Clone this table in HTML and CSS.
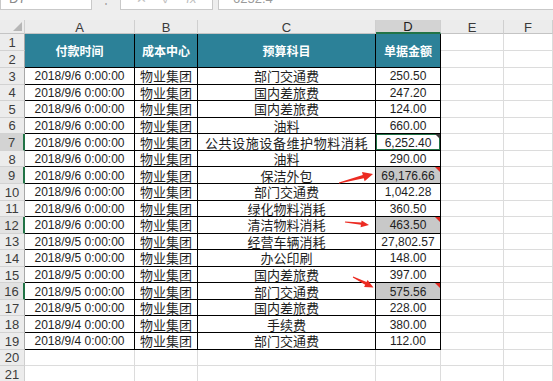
FILE: index.html
```html
<!DOCTYPE html>
<html lang="zh">
<head>
<meta charset="utf-8">
<title>Sheet</title>
<link rel="stylesheet" href="styles.css">
</head>
<body>
<div class="page">
  <div class="topbar">
    <div class="box namebox"><span class="cut">D7</span></div>
    <div class="grip"><span class="cut">⋮</span></div>
    <div class="box fxbox"><span class="cut">✕</span><span class="cut">✓</span><span class="cut fx">fx</span></div>
    <div class="box formula"><span class="cut">6252.4</span></div>
  </div>
  <div class="sheet">
    <div class="corner"><span class="tri"></span></div>
    <div class="ch">A</div><div class="ch">B</div><div class="ch">C</div><div class="ch sel">D</div><div class="ch">E</div><div class="ch">F</div>

    <div class="rh">1</div>
    <div class="h">付款时间</div><div class="h">成本中心</div><div class="h">预算科目</div><div class="h">单据金额</div>
    <div class="c"></div><div class="c"></div>
    <div class="rh">2</div>
    <div class="c"></div><div class="c"></div>

    <div class="rh">3</div><div class="t dt">2018/9/6 0:00:00</div><div class="t cn">物业集团</div><div class="t cn">部门交通费</div><div class="t num">250.50</div><div class="c"></div><div class="c"></div>
    <div class="rh">4</div><div class="t dt">2018/9/6 0:00:00</div><div class="t cn">物业集团</div><div class="t cn">国内差旅费</div><div class="t num">247.20</div><div class="c"></div><div class="c"></div>
    <div class="rh">5</div><div class="t dt">2018/9/6 0:00:00</div><div class="t cn">物业集团</div><div class="t cn">国内差旅费</div><div class="t num">124.00</div><div class="c"></div><div class="c"></div>
    <div class="rh">6</div><div class="t dt">2018/9/6 0:00:00</div><div class="t cn">物业集团</div><div class="t cn">油料</div><div class="t num">660.00</div><div class="c"></div><div class="c"></div>
    <div class="rh act">7</div><div class="t dt">2018/9/6 0:00:00</div><div class="t cn">物业集团</div><div class="t cn wide">公共设施设备维护物料消耗</div><div class="t num active note dark">6,252.40</div><div class="c"></div><div class="c"></div>
    <div class="rh">8</div><div class="t dt">2018/9/6 0:00:00</div><div class="t cn">物业集团</div><div class="t cn">油料</div><div class="t num">290.00</div><div class="c"></div><div class="c"></div>
    <div class="rh sel">9</div><div class="t dt">2018/9/6 0:00:00</div><div class="t cn">物业集团</div><div class="t cn">保洁外包</div><div class="t num hl note">69,176.66</div><div class="c"></div><div class="c"></div>
    <div class="rh">10</div><div class="t dt">2018/9/6 0:00:00</div><div class="t cn">物业集团</div><div class="t cn">部门交通费</div><div class="t num">1,042.28</div><div class="c"></div><div class="c"></div>
    <div class="rh">11</div><div class="t dt">2018/9/6 0:00:00</div><div class="t cn">物业集团</div><div class="t cn">绿化物料消耗</div><div class="t num">360.50</div><div class="c"></div><div class="c"></div>
    <div class="rh sel">12</div><div class="t dt">2018/9/6 0:00:00</div><div class="t cn">物业集团</div><div class="t cn">清洁物料消耗</div><div class="t num hl note">463.50</div><div class="c"></div><div class="c"></div>
    <div class="rh">13</div><div class="t dt">2018/9/5 0:00:00</div><div class="t cn">物业集团</div><div class="t cn">经营车辆消耗</div><div class="t num">27,802.57</div><div class="c"></div><div class="c"></div>
    <div class="rh">14</div><div class="t dt">2018/9/5 0:00:00</div><div class="t cn">物业集团</div><div class="t cn">办公印刷</div><div class="t num">148.00</div><div class="c"></div><div class="c"></div>
    <div class="rh">15</div><div class="t dt">2018/9/5 0:00:00</div><div class="t cn">物业集团</div><div class="t cn">国内差旅费</div><div class="t num">397.00</div><div class="c"></div><div class="c"></div>
    <div class="rh sel">16</div><div class="t dt">2018/9/5 0:00:00</div><div class="t cn">物业集团</div><div class="t cn">部门交通费</div><div class="t num hl note">575.56</div><div class="c"></div><div class="c"></div>
    <div class="rh">17</div><div class="t dt">2018/9/5 0:00:00</div><div class="t cn">物业集团</div><div class="t cn">国内差旅费</div><div class="t num">228.00</div><div class="c"></div><div class="c"></div>
    <div class="rh">18</div><div class="t dt">2018/9/4 0:00:00</div><div class="t cn">物业集团</div><div class="t cn">手续费</div><div class="t num">380.00</div><div class="c"></div><div class="c"></div>
    <div class="rh">19</div><div class="t dt">2018/9/4 0:00:00</div><div class="t cn">物业集团</div><div class="t cn">部门交通费</div><div class="t num">112.00</div><div class="c"></div><div class="c"></div>
    <div class="rh out">20</div><div class="c"></div><div class="c"></div><div class="c"></div><div class="c"></div><div class="c"></div><div class="c"></div>
    <div class="rh out">21</div><div class="c"></div><div class="c"></div><div class="c"></div><div class="c"></div><div class="c"></div><div class="c"></div>
  </div>
  <svg class="arrows" width="553" height="381" viewBox="0 0 553 381">
    <polygon fill="#ec2b22" points="339.1,183.5 363.8,178.3 364.6,181.2 373,174 362,172 362.8,174.9 338.9,182.5"/>
    <polygon fill="#ec2b22" points="344.9,222.5 360.9,224.8 360.6,227.3 369,225 361.6,220.4 361.3,222.4 345.1,221.5"/>
    <polygon fill="#ec2b22" points="352.8,277.5 365.2,284.8 364.1,286.9 373.5,287.5 367.6,280 366.5,282.1 353.2,276.6"/>
  </svg>
</div>
</body>
</html>
```
FILE: styles.css
```css
* { box-sizing: border-box; }
html, body { margin: 0; padding: 0; background: #ffffff; }
body {
  font-family: "Liberation Sans", "Noto Sans CJK SC", sans-serif;
  color: #1e1e1e;
  overflow: hidden;
}
.page {
  position: relative;
  width: 553px;
  height: 381px;
  overflow: hidden;
}

/* formula bar */
.topbar {
  display: flex;
  align-items: flex-start;
  height: 20px;
  background: #eeeeee;
}
.box {
  height: 10px;
  background: #ffffff;
  border: 1px solid #c9c9c9;
  border-top: none;
  overflow: hidden;
  display: flex;
  align-items: flex-end;
  font-size: 13px;
  color: #b0b0b0;
}
.cut {
  display: block;
  line-height: 13px;
  margin-bottom: 4px;
}
.namebox { width: 92px; padding-left: 8px; color: #8a8a8a; }
.grip {
  width: 28px;
  height: 10px;
  overflow: hidden;
  display: flex;
  justify-content: center;
  align-items: flex-end;
  font-size: 12px;
  color: #a0a0a0;
}
.fxbox {
  width: 93px;
  margin-right: 5px;
  justify-content: space-around;
  padding: 0 8px;
  color: #c0c0c0;
}
.fx { font-style: italic; }
.formula { flex: 1; padding-left: 14px; color: #9a9a9a; border-right: none; }

/* grid */
.sheet {
  display: grid;
  grid-template-columns: 25px 110px 63px 178px 65px 63px 1fr;
  grid-template-rows: 14px 17px 17px repeat(19, 16.57px);
}
.sheet > div {
  display: flex;
  align-items: center;
  justify-content: center;
  white-space: nowrap;
  overflow: hidden;
  border-right: 1px solid #dcdcdc;
  border-bottom: 1px solid #dcdcdc;
}
.corner {
  background: #ececec;
  align-items: flex-end !important;
  justify-content: flex-end !important;
  padding: 0 2px 2px 0;
  border-bottom-color: #c4c4c4 !important;
  border-right-color: #cfcfcf !important;
}
.tri {
  width: 0;
  height: 0;
  border-left: 9px solid transparent;
  border-bottom: 9px solid #b6b6b6;
}
.ch {
  background: #ececec;
  font-size: 13px;
  color: #3a3a3a;
  padding-top: 1px;
  border-right-color: #cfcfcf !important;
  border-bottom-color: #c4c4c4 !important;
}
.ch.sel {
  background: #d3d3d3;
  color: #1d1d1d;
  border-bottom: 2px solid #217346 !important;
}
.rh {
  background: #ececec;
  font-size: 13px;
  color: #3c3c3c;
  border-right-color: #a8a8a8 !important;
  border-bottom-color: #d2d2d2 !important;
  padding-top: 1px;
}
.rh.out { border-right-color: #cfcfcf !important; }
.rh.act {
  background: #d3d3d3;
  border-right: 2px solid #217346 !important;
}
.rh.sel {
  background: #e2e2e2;
  border-right: 2px solid #217346 !important;
}

.h {
  grid-row: span 2;
  background: #2c8198;
  color: #ffffff;
  font-weight: bold;
  font-size: 12px;
  font-family: "Noto Sans CJK SC", sans-serif;
  border-right: 1px solid #000000 !important;
  border-bottom: 1px solid #000000 !important;
}
.t {
  border-right: 1px solid #000000 !important;
  border-bottom: 1px solid #000000 !important;
  padding-top: 1px;
}
.dt { font-size: 12px; }
.cn {
  font-family: "Noto Sans CJK SC", sans-serif;
  font-size: 13px;
  line-height: 14px;
}
.wide { letter-spacing: 0.6px; }
.num { font-size: 12px; position: relative; }
.hl { background: #c8c8c8; }
.active { box-shadow: inset 0 0 0 1px #217346; }
.note::after {
  content: "";
  position: absolute;
  top: 0;
  right: 0;
  width: 0;
  height: 0;
  border-left: 5px solid transparent;
  border-top: 5px solid #e0261e;
}
.note.dark::after { border-top-color: #3a3a3a; }

.arrows {
  position: absolute;
  left: 0;
  top: 0;
  pointer-events: none;
}
```
